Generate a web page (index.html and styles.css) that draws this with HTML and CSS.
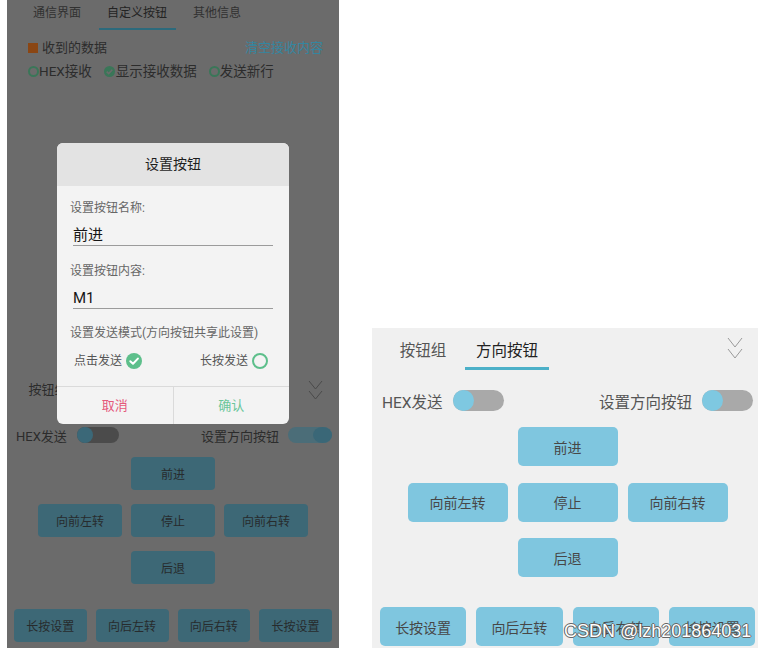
FILE: index.html
```html
<!DOCTYPE html>
<html lang="zh-CN">
<head>
<meta charset="utf-8">
<title>自定义按钮</title>
<link rel="stylesheet" href="styles.css">
</head>
<body>
<div class="page">
  <section class="phone phone-left">
    <div class="top-tabs">
      <div class="tab">通信界面</div>
      <div class="tab active">自定义按钮</div>
      <div class="tab">其他信息</div>
    </div>
    <div class="recv-row">
      <div class="recv-title"><span class="sq"></span>收到的数据</div>
      <div class="clear-link">清空接收内容</div>
    </div>
    <div class="radio-row">
      <span class="opt"><span class="radio"></span>HEX接收</span>
      <span class="opt"><svg class="radio-on" viewBox="0 0 11 11"><circle cx="5.5" cy="5.5" r="5.5"/><path d="M2.7 5.6 L4.7 7.5 L8.3 3.7"/></svg>显示接收数据</span>
      <span class="opt"><span class="radio"></span>发送新行</span>
    </div>

    <div class="lower">
      <div class="btn-tabs">
        <div class="tab">按钮组</div>
        <div class="tab active">方向按钮</div>
        <svg class="chev" viewBox="0 0 15 20"><path d="M1 1 L7.5 9 L14 1 M1 11 L7.5 19 L14 11"/></svg>
      </div>
      <div class="switch-row">
        <div class="sw-group">HEX发送<span class="toggle"><span class="knob"></span></span></div>
        <div class="sw-group">设置方向按钮<span class="toggle on"><span class="knob"></span></span></div>
      </div>
      <div class="dir">
        <div class="dir-row"><div class="btn">前进</div></div>
        <div class="dir-row"><div class="btn">向前左转</div><div class="btn">停止</div><div class="btn">向前右转</div></div>
        <div class="dir-row"><div class="btn">后退</div></div>
      </div>
      <div class="bottom-row">
        <div class="btn">长按设置</div><div class="btn">向后左转</div><div class="btn">向后右转</div><div class="btn">长按设置</div>
      </div>
    </div>

    <div class="dialog">
      <div class="dlg-title">设置按钮</div>
      <div class="dlg-body">
        <div class="dlg-label">设置按钮名称:</div>
        <div class="dlg-input">前进</div>
        <div class="dlg-label gap">设置按钮内容:</div>
        <div class="dlg-input">M1</div>
        <div class="dlg-label gap2">设置发送模式(方向按钮共享此设置)</div>
        <div class="dlg-opts">
          <div class="dlg-opt">点击发送<svg class="ico" viewBox="0 0 16 16"><circle cx="8" cy="8" r="8" class="fill"/><path d="M4.3 8.2 L7 10.8 L11.9 5.6" class="tick"/></svg></div>
          <div class="dlg-opt">长按发送<svg class="ico" viewBox="0 0 16 16"><circle cx="8" cy="8" r="7" class="ring"/></svg></div>
        </div>
      </div>
      <div class="dlg-foot">
        <div class="dlg-btn cancel">取消</div>
        <div class="dlg-btn ok">确认</div>
      </div>
    </div>
  </section>

  <section class="phone phone-right">
    <div class="btn-tabs">
      <div class="tab">按钮组</div>
      <div class="tab active">方向按钮</div>
      <svg class="chev" viewBox="0 0 16 22"><path d="M1 1 L8 10 L15 1 M1 12 L8 21 L15 12"/></svg>
    </div>
    <div class="switch-row">
      <div class="sw-group">HEX发送<span class="toggle"><span class="knob"></span></span></div>
      <div class="sw-group">设置方向按钮<span class="toggle"><span class="knob"></span></span></div>
    </div>
    <div class="dir">
      <div class="dir-row"><div class="btn">前进</div></div>
      <div class="dir-row"><div class="btn">向前左转</div><div class="btn">停止</div><div class="btn">向前右转</div></div>
      <div class="dir-row"><div class="btn">后退</div></div>
    </div>
    <div class="bottom-row">
      <div class="btn">长按设置</div><div class="btn">向后左转</div><div class="btn">向后右转</div><div class="btn">长按设置</div>
    </div>
    <div class="watermark">CSDN @lzh201864031</div>
  </section>
</div>
</body>
</html>
```

FILE: styles.css
```css
* { box-sizing: border-box; }
html, body { margin: 0; padding: 0; }
body {
  width: 764px;
  height: 649px;
  background: #ffffff;
  font-family: Roboto, "Noto Sans CJK SC", sans-serif;
  overflow: hidden;
}
.page {
  display: flex;
  align-items: flex-start;
  padding-left: 7px;
}
.phone {
  position: relative;
  display: flex;
  flex-direction: column;
  flex: none;
}
.phone-left {
  width: 332px;
  height: 648px;
  background: #6b6b6b;
}
.phone-right {
  width: 386px;
  height: 320px;
  margin-left: 33px;
  margin-top: 328px;
  background: #f0f0f0;
}

/* ---------- top tabs (left) ---------- */
.top-tabs {
  display: flex;
  height: 30px;
  padding-left: 10px;
}
.top-tabs .tab {
  width: 80px;
  padding-top: 5px;
  font-size: 12px;
  line-height: 16px;
  text-align: center;
  color: #313131;
}
.top-tabs .tab.active {
  color: #232323;
  background: linear-gradient(#2c6a7c, #2c6a7c) no-repeat center bottom / 77px 2px;
}

.recv-row {
  display: flex;
  justify-content: space-between;
  margin-top: 9px;
  padding: 0 16px 0 21px;
  font-size: 13px;
  line-height: 18px;
}
.recv-title { display: flex; align-items: center; color: #2c2c2c; }
.sq {
  width: 10px;
  height: 10px;
  margin-right: 4px;
  background: #8a4614;
}
.clear-link { color: #3486a0; }

.radio-row {
  display: flex;
  align-items: center;
  gap: 12px;
  margin-top: 5px;
  padding-left: 21px;
  font-size: 13.5px;
  line-height: 18px;
  color: #2c2c2c;
}
.opt { display: flex; align-items: center; }
.radio {
  width: 11px;
  height: 11px;
  border: 2px solid #3a7658;
  border-radius: 50%;
}
.radio-on { width: 11px; height: 11px; margin-right: 1px; }
.radio-on circle { fill: #3a7658; }
.radio-on path { fill: none; stroke: #6b6b6b; stroke-width: 1.6; }

/* ---------- lower area ---------- */
.lower {
  margin-top: auto;
  padding-bottom: 6px;
  display: flex;
  flex-direction: column;
}
.btn-tabs {
  display: flex;
  height: 30px;
  padding-left: 5px;
}
.btn-tabs .tab {
  width: 72px;
  padding-top: 6px;
  font-size: 13px;
  line-height: 18px;
  text-align: center;
  color: #2c2c2c;
}
.btn-tabs .tab.active {
  background: linear-gradient(#2c6a7c, #2c6a7c) no-repeat center bottom / 100% 2px;
}
.chev {
  margin-left: auto;
  margin-right: 16px;
  margin-top: 5px;
  width: 15px;
  height: 20px;
}
.chev path { fill: none; stroke: #4a4a4a; stroke-width: 1; }

.switch-row {
  display: flex;
  align-items: center;
  justify-content: space-between;
  height: 18px;
  margin-top: 21px;
  padding: 0 7px 0 9px;
  font-size: 13px;
  color: #2c2c2c;
}
.sw-group { display: flex; align-items: center; gap: 10px; }
.sw-group + .sw-group { gap: 9px; }
.toggle {
  display: flex;
  width: 42px;
  height: 16px;
  border-radius: 8px;
  background: #4b4b4b;
}
.toggle .knob {
  width: 16px;
  height: 16px;
  border-radius: 50%;
  background: #3b6878;
}
.toggle.on {
  width: 44px;
  justify-content: flex-end;
  background: #4b6d78;
}
.toggle.on .knob { width: 19px; height: 16px; background: #3a6777; }

.dir {
  display: flex;
  flex-direction: column;
  gap: 14px;
  margin-top: 13px;
}
.dir-row {
  display: flex;
  justify-content: center;
  gap: 9px;
}
.btn {
  display: flex;
  align-items: center;
  justify-content: center;
  width: 84px;
  height: 33px;
  border-radius: 4px;
  background: #3d6876;
  color: #272b2d;
  font-size: 12px;
}
.bottom-row {
  display: flex;
  gap: 9px;
  margin-top: 25px;
  padding: 0 7px;
}
.bottom-row .btn { flex: 1; width: auto; }

/* ---------- dialog (over the dimmed page) ---------- */
.dialog {
  position: absolute;
  left: 50px;
  top: 143px;
  width: 232px;
  height: 281px;
  display: flex;
  flex-direction: column;
  border-radius: 6px;
  overflow: hidden;
  background: #f3f3f3;
}
.dlg-title {
  height: 43px;
  line-height: 43px;
  text-align: center;
  font-size: 14px;
  color: #1e1e1e;
  background: #e3e3e3;
}
.dlg-body {
  flex: 1;
  padding: 14px 16px 0 13px;
}
.dlg-label {
  font-size: 12px;
  line-height: 16px;
  color: #666;
}
.dlg-label.gap { margin-top: 17px; }
.dlg-label.gap2 { margin-top: 16px; }
.dlg-input {
  width: 200px;
  margin: 9px 0 0 3px;
  font-size: 15px;
  line-height: 20px;
  color: #151515;
  border-bottom: 1px solid #9b9b9b;
}
.dlg-opts {
  display: flex;
  justify-content: space-between;
  margin-top: 12px;
  padding: 0 5px 0 4px;
  font-size: 12px;
  line-height: 16px;
  color: #555;
}
.dlg-opt { display: flex; align-items: center; gap: 4px; }
.ico { width: 16px; height: 16px; }
.ico .fill { fill: #5dbf8b; }
.ico .tick { fill: none; stroke: #fff; stroke-width: 2; stroke-linecap: round; stroke-linejoin: round; }
.ico .ring { fill: none; stroke: #5dbf8b; stroke-width: 2; }
.dlg-foot {
  display: flex;
  height: 38px;
  border-top: 1px solid #dadada;
}
.dlg-btn {
  flex: 1;
  text-align: center;
  line-height: 37px;
  font-size: 13px;
}
.dlg-btn.cancel { color: #e5587b; }
.dlg-btn.ok { color: #6ac69a; border-left: 1px solid #dadada; }

/* ---------- right phone (undimmed, larger) ---------- */
.phone-right .btn-tabs {
  height: 42px;
  padding-left: 9px;
}
.phone-right .btn-tabs .tab {
  width: 84px;
  padding-top: 13px;
  font-size: 15.5px;
  line-height: 20px;
  color: #555;
}
.phone-right .btn-tabs .tab.active {
  color: #222;
  background: linear-gradient(#4cb0c8, #4cb0c8) no-repeat center bottom / 100% 3px;
}
.phone-right .chev {
  width: 16px;
  height: 22px;
  margin-top: 9px;
  margin-right: 15px;
}
.phone-right .chev path { stroke: #9a9a9a; }
.phone-right .switch-row {
  height: 21px;
  margin-top: 20px;
  padding: 0 5px 0 10px;
  font-size: 15.5px;
  color: #555;
}
.phone-right .sw-group { gap: 10px; }
.phone-right .toggle {
  width: 51px;
  height: 21px;
  border-radius: 10.5px;
  background: #a9a9a9;
}
.phone-right .toggle .knob {
  width: 21px;
  height: 21px;
  background: #7ec8e1;
}
.phone-right .dir {
  gap: 16.5px;
  margin-top: 16px;
  padding-left: 5px;
}
.phone-right .dir-row { gap: 10px; }
.phone-right .btn {
  width: 100px;
  height: 39px;
  border-radius: 5px;
  background: #7fc6df;
  color: #474747;
  font-size: 14px;
}
.phone-right .bottom-row {
  gap: 10px;
  margin-top: 30px;
  padding: 0 3px 0 8px;
}
.phone-right .bottom-row .btn { width: auto; }

.watermark {
  position: absolute;
  left: 192px;
  top: 293px;
  font-family: "Liberation Sans", Arial, sans-serif;
  font-size: 18px;
  line-height: 20px;
  color: #ffffff;
  white-space: nowrap;
  text-shadow: 0 0 1px #4a4a4a, 1px 0 0 #6a6a6a, -1px 0 0 #6a6a6a, 0 1px 0 #6a6a6a, 0 -1px 0 #6a6a6a;
}
```
